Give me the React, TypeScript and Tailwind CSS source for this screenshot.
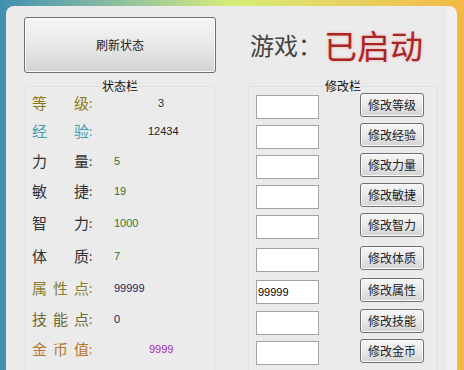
const cjk = "font-['Noto_Sans_CJK_SC','Noto_Sans',sans-serif]";

type Stat = {
  chars: string[];
  color: string;
  value: string;
  valueColor: string;
  valueOffset: string;
  mt: string;
};

const stats: Stat[] = [
  { chars: ["等", "级"], color: "text-[#8a7b18]", value: "3", valueColor: "text-[#333333]", valueOffset: "ml-[44px]", mt: "mt-[-1px]" },
  { chars: ["经", "验"], color: "text-[#3f9db0]", value: "12434", valueColor: "text-[#222222]", valueOffset: "ml-[34px]", mt: "mt-[4px]" },
  { chars: ["力", "量"], color: "text-[#333333]", value: "5", valueColor: "text-[#2f6f2f]", valueOffset: "", mt: "mt-[6px]" },
  { chars: ["敏", "捷"], color: "text-[#333333]", value: "19", valueColor: "text-[#2f6f2f]", valueOffset: "", mt: "mt-[6px]" },
  { chars: ["智", "力"], color: "text-[#333333]", value: "1000", valueColor: "text-[#2f7a2f]", valueOffset: "", mt: "mt-[8px]" },
  { chars: ["体", "质"], color: "text-[#333333]", value: "7", valueColor: "text-[#2f6f2f]", valueOffset: "", mt: "mt-[9px]" },
  { chars: ["属", "性", "点"], color: "text-[#8a7f2c]", value: "99999", valueColor: "text-[#1e2060]", valueOffset: "", mt: "mt-[8px]" },
  { chars: ["技", "能", "点"], color: "text-[#6a6a2c]", value: "0", valueColor: "text-[#1e2060]", valueOffset: "", mt: "mt-[7px]" },
  { chars: ["金", "币", "值"], color: "text-[#b5772a]", value: "9999", valueColor: "text-[#a02eb0]", valueOffset: "ml-[35px]", mt: "mt-[6px]" },
];

const edits = [
  { label: "修改等级", value: "", mt: "mt-[3px]" },
  { label: "修改经验", value: "", mt: "mt-[6px]" },
  { label: "修改力量", value: "", mt: "mt-[6px]" },
  { label: "修改敏捷", value: "", mt: "mt-[6px]" },
  { label: "修改智力", value: "", mt: "mt-[6px]" },
  { label: "修改体质", value: "", mt: "mt-[9px]" },
  { label: "修改属性", value: "99999", mt: "mt-[8px]" },
  { label: "修改技能", value: "", mt: "mt-[7px]" },
  { label: "修改金币", value: "", mt: "mt-[6px]" },
];

function WinButton({ children, className }: { children: React.ReactNode; className: string }) {
  return (
    <button
      className={`flex items-center justify-center rounded-[3px] border border-[#707070] bg-gradient-to-b from-[#f6f6f6] via-[#e8e8e8] to-[#d3d3d3] text-[12px] text-[#222222] shadow-[inset_0_0_0_1px_#fbfbfb] ${cjk} ${className}`}
    >
      {children}
    </button>
  );
}

export default function App() {
  return (
    <div className="h-[370px] w-[464px] overflow-hidden bg-gradient-to-r from-[#3f8fb0] via-[#d6ec78] to-[#f2b845] pl-[6px] pr-[7px] pt-[6px]">
      <div className="h-full rounded-t-[8px] border-r-[10px] border-[#f0f0f0] bg-[#ebebeb]">
        <div className="flex items-center pl-[18px] pt-[11px]">
          <WinButton className="h-[56px] w-[192px]">刷新状态</WinButton>
          <div className={`ml-[34px] flex items-center ${cjk}`}>
            <span className="text-[24px] leading-none text-[#454545]">游戏：</span>
            <span className="ml-[2px] text-[33px] leading-none text-[#a82626] [text-shadow:0_0_3px_#f0a8a8]">已启动</span>
          </div>
        </div>

        <div className="mt-[7px] flex gap-[33px] pl-[19px]">
          <fieldset className="h-[300px] w-[190px] border border-[#dbe2e7]">
            <legend className={`mx-auto text-[12px] leading-[12px] text-[#111111] ${cjk}`}>状态栏</legend>
            {stats.map((s) => (
              <div key={s.chars.join("")} className={`flex h-[24px] items-center pl-[6px] ${s.mt}`}>
                <div className={`flex w-[82px] items-center text-[15px] ${s.color} ${cjk}`}>
                  <span className="flex w-[57px] justify-between">
                    {s.chars.map((c) => (
                      <span key={c}>{c}</span>
                    ))}
                  </span>
                  <span className="text-[12px]">:</span>
                </div>
                <span className={`font-['Liberation_Sans',sans-serif] text-[11px] ${s.valueColor} ${s.valueOffset}`}>
                  {s.value}
                </span>
              </div>
            ))}
          </fieldset>

          <fieldset className="h-[300px] w-[190px] border border-[#dbe2e7]">
            <legend className={`mx-auto text-[12px] leading-[12px] text-[#111111] ${cjk}`}>修改栏</legend>
            {edits.map((e) => (
              <div key={e.label} className={`flex h-[24px] items-center pl-[7px] ${e.mt}`}>
                <input
                  readOnly
                  value={e.value}
                  className="h-[24px] w-[63px] border border-[#a3a3a3] bg-white pl-[1px] font-['Liberation_Sans',sans-serif] text-[11px] text-black outline-none"
                />
                <WinButton className="mb-[4px] ml-[41px] h-[24px] w-[64px]">{e.label}</WinButton>
              </div>
            ))}
          </fieldset>
        </div>
      </div>
    </div>
  );
}
